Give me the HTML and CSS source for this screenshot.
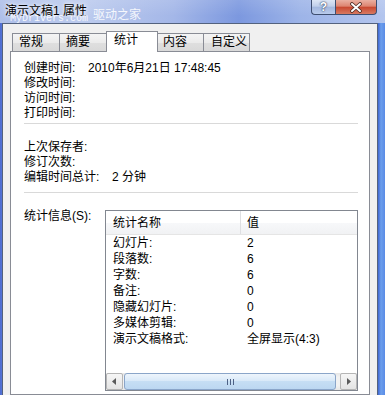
FILE: index.html
```html
<!DOCTYPE html>
<html lang="zh-CN">
<head>
    <meta charset="UTF-8">
    <title>演示文稿1 属性</title>
    <link rel="stylesheet" href="styles.css">
</head>
<body>

<div class="window">
    <!-- Title bar -->
    <div class="titlebar">
        <span class="title">演示文稿1 属性</span>
        <span class="watermark"><span class="wm-latin">MyDrivers.com</span>驱动之家</span>
        <div class="caption-buttons">
            <div class="btn-help">?</div>
            <div class="btn-close">
                <svg width="14" height="11" viewBox="0 0 14 11">
                    <path d="M3 2 L11 9 M11 2 L3 9" stroke="#4a2a24" stroke-width="3.6" stroke-linecap="round"/>
                    <path d="M3 2 L11 9 M11 2 L3 9" stroke="#fff" stroke-width="2" stroke-linecap="round"/>
                </svg>
            </div>
        </div>
    </div>

    <div class="client">
        <div class="tabs">
            <div class="tab t1">常规</div>
            <div class="tab t2">摘要</div>
            <div class="tab active">统计</div>
            <div class="tab t4">内容</div>
            <div class="tab t5">自定义</div>
        </div>

        <div class="page">
            <div class="info times">
                <span>创建时间:</span><span>2010年6月21日 17:48:45</span>
                <span>修改时间:</span><span></span>
                <span>访问时间:</span><span></span>
                <span>打印时间:</span><span></span>
            </div>
            <div class="sep sep1"></div>
            <div class="info edits">
                <span>上次保存者:</span><span></span>
                <span>修订次数:</span><span></span>
                <span>编辑时间总计:</span><span>2 分钟</span>
            </div>
            <div class="sep sep2"></div>

            <div class="stats">
                <div class="stats-label">统计信息(S):</div>
                <div class="listview">
                    <div class="lv-head">
                        <div class="col-name">统计名称</div>
                        <div class="col-val">值</div>
                    </div>
                    <div class="lv-body">
                        <div class="lv-row"><div class="col-name">幻灯片:</div><div class="col-val">2</div></div>
                        <div class="lv-row"><div class="col-name">段落数:</div><div class="col-val">6</div></div>
                        <div class="lv-row"><div class="col-name">字数:</div><div class="col-val">6</div></div>
                        <div class="lv-row"><div class="col-name">备注:</div><div class="col-val">0</div></div>
                        <div class="lv-row"><div class="col-name">隐藏幻灯片:</div><div class="col-val">0</div></div>
                        <div class="lv-row"><div class="col-name">多媒体剪辑:</div><div class="col-val">0</div></div>
                        <div class="lv-row"><div class="col-name">演示文稿格式:</div><div class="col-val">全屏显示(4:3)</div></div>
                    </div>
                    <div class="hscroll">
                        <div class="sb-btn">
                            <svg width="5" height="7" viewBox="0 0 5 7"><path d="M4 0 L0 3.5 L4 7 Z" fill="#5a5a5a"/></svg>
                        </div>
                        <div class="sb-track">
                            <div class="sb-thumb">
                                <svg width="7" height="6" viewBox="0 0 7 6">
                                    <rect x="0" y="0" width="1" height="6" fill="#4d6185"/>
                                    <rect x="3" y="0" width="1" height="6" fill="#4d6185"/>
                                    <rect x="6" y="0" width="1" height="6" fill="#4d6185"/>
                                </svg>
                            </div>
                        </div>
                        <div class="sb-btn">
                            <svg width="5" height="7" viewBox="0 0 5 7"><path d="M1 0 L5 3.5 L1 7 Z" fill="#5a5a5a"/></svg>
                        </div>
                    </div>
                </div>
            </div>
        </div>
    </div>
</div>

</body>
</html>
```

FILE: styles.css
```css
/* Page */
body {
    margin: 0;
    width: 385px;
    height: 395px;
    overflow: hidden;
    font-family: "Liberation Sans", "Noto Sans CJK SC", sans-serif;
    font-size: 12px;
    color: #000;
}

/* Window frame (blue glass strips left and right) */
.window {
    width: 385px;
    height: 395px;
    display: flex;
    flex-direction: column;
    background: linear-gradient(90deg, #4d6cd2 0, #5877d6 3px, #6a8fe0 50%, #3f66d2 378px, #6c9fec 381px, #5a8be6 385px);
    overflow: hidden;
}

/* Title bar */
.titlebar {
    height: 23px;
    flex: none;
    display: flex;
    align-items: flex-start;
    position: relative;
    background:
        linear-gradient(180deg, rgba(255, 255, 255, 0.12), rgba(255, 255, 255, 0) 70%),
        linear-gradient(90deg, #aebfe9 0%, #bccbee 22%, #a4b7e8 45%, #7c98df 62%, #9db4e8 78%, #b3c5ee 100%);
}
.title {
    padding: 4px 0 0 5px;
    line-height: 14px;
    font-size: 12px;
    color: #000;
    text-shadow: 0 0 6px rgba(255, 255, 255, 0.9), 0 0 3px rgba(255, 255, 255, 0.9);
}
.watermark {
    position: absolute;
    left: 10px;
    top: 8px;
    font-size: 12px;
    line-height: 14px;
    color: rgba(255, 255, 255, 0.88);
    white-space: nowrap;
}
.wm-latin {
    font-family: "Liberation Mono", monospace;
    font-size: 10px;
    margin-right: 5px;
    position: relative;
    top: 2px;
}

.caption-buttons {
    margin-left: auto;
    margin-right: 8px;
    display: flex;
}
.btn-help,
.btn-close {
    height: 15px;
    box-sizing: border-box;
    border: 1px solid #3e4e70;
    border-top: none;
    display: flex;
    align-items: center;
    justify-content: center;
}
.btn-help {
    width: 24px;
    border-right: none;
    border-bottom-left-radius: 4px;
    background: linear-gradient(180deg, #dde6f5 0%, #c0cfea 45%, #a3b7de 50%, #b9cbec 100%);
    color: #fff;
    font-weight: bold;
    font-size: 12px;
    line-height: 14px;
    text-shadow: 0 0 1px #2d3d5e, 0 0 2px #2d3d5e;
}
.btn-close {
    width: 42px;
    border-bottom-right-radius: 4px;
    background: linear-gradient(180deg, #eab0a2 0%, #dd8470 45%, #c8472f 50%, #d77a62 100%);
}

/* Dialog client area */
.client {
    flex: 1;
    min-height: 0;
    margin: 0 7px 0 2px;
    border: 1px solid #53627e;
    border-bottom: none;
    background: #f0f0f0;
    display: flex;
    flex-direction: column;
}

/* Tabs */
.tabs {
    height: 27px;
    flex: none;
    display: flex;
    align-items: flex-end;
    padding-left: 9px;
}
.tab {
    height: 18px;
    box-sizing: border-box;
    border: 1px solid #898c95;
    border-bottom: none;
    margin-left: -1px;
    padding-left: 6px;
    line-height: 17px;
    background: linear-gradient(180deg, #f4f4f4 0%, #ebebeb 50%, #dfdfdf 51%, #d9d9d9 100%);
}
.tab.t1 { width: 48px; margin-left: 0; }
.tab.t2 { width: 48px; }
.tab.t4 { width: 47px; padding-left: 5px; }
.tab.t5 { width: 47px; padding-left: 7px; }
.tab.active {
    width: 52px;
    height: 21px;
    margin-bottom: -1px;
    padding-left: 7px;
    line-height: 17px;
    background: #fff;
    position: relative;
    z-index: 1;
}

/* Tab page */
.page {
    flex: 1;
    margin: 0 7px;
    border: 1px solid #898c95;
    background: #fff;
    padding: 9px 11px 0 13px;
}

.info {
    display: grid;
    line-height: 15px;
}
.times { grid-template-columns: 64px auto; }
.edits { grid-template-columns: 88px auto; }

.sep {
    height: 1px;
    background: #d9d9d9;
}
.sep1 { margin: 2px 0 16px; }
.sep2 { margin: 7px 0 17px; }

/* Statistics list */
.stats {
    display: flex;
    align-items: flex-start;
}
.stats-label {
    width: 81px;
    flex: none;
    line-height: 12px;
}
.listview {
    flex: 1;
    height: 181px;
    box-sizing: border-box;
    border: 1px solid #828790;
    display: flex;
    flex-direction: column;
}
.lv-head {
    height: 24px;
    flex: none;
    box-sizing: border-box;
    display: flex;
    border-bottom: 1px solid #e5e5e5;
    background: linear-gradient(180deg, #ffffff 0%, #ffffff 50%, #f7f8fa 51%, #f1f2f4 100%);
}
.lv-head .col-name,
.lv-head .col-val {
    padding-top: 1px;
    line-height: 22px;
}
.col-name {
    width: 127px;
    padding-left: 7px;
    flex: none;
}
.lv-head .col-name {
    border-right: 1px solid #dedfe2;
}
.col-val {
    padding-left: 6px;
}
.lv-body {
    flex: 1;
}
.lv-row {
    display: flex;
    height: 16px;
    line-height: 16px;
}
.lv-row .col-name {
    width: 128px;
}

/* Horizontal scrollbar */
.hscroll {
    height: 17px;
    flex: none;
    display: flex;
    background: linear-gradient(180deg, #e6e6e6 0%, #f2f2f2 25%, #f2f2f2 75%, #e6e6e6 100%);
}
.sb-btn {
    width: 17px;
    box-sizing: border-box;
    border: 1px solid #b5b5b5;
    border-radius: 2px;
    background: linear-gradient(180deg, #f6f6f6, #e4e4e4);
    display: flex;
    align-items: center;
    justify-content: center;
}
.sb-track {
    flex: 1;
    display: flex;
    padding-left: 1px;
}
.sb-thumb {
    width: 212px;
    box-sizing: border-box;
    border: 1px solid #8aa5c9;
    border-radius: 3px;
    background: linear-gradient(180deg, #eef5fc 0%, #d9e9f8 45%, #c6def4 50%, #bcd7f1 100%);
    display: flex;
    align-items: center;
    justify-content: center;
}
```
